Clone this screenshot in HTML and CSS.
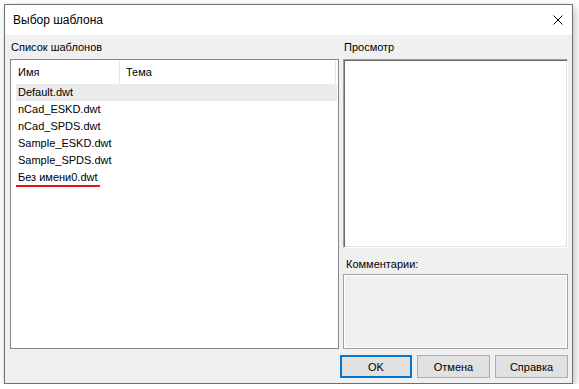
FILE: index.html
```html
<!DOCTYPE html>
<html lang="ru">

<head>
    <meta charset="UTF-8">
    <meta name="viewport" content="width=device-width, initial-scale=1.0">
    <title>Выбор шаблона</title>
    <link rel="stylesheet" href="styles.css">
</head>

<body>
    <div class="window">
        <div class="titlebar">
            <span class="title">Выбор шаблона</span>
            <span class="close">
                <svg width="10" height="10" viewBox="0 0 10 10">
                    <path d="M0.5 0.5 L9.5 9.5 M9.5 0.5 L0.5 9.5" stroke="#000" stroke-width="1" fill="none"/>
                </svg>
            </span>
        </div>

        <div class="content">
            <div class="columns">
                <div class="col-left">
                    <div class="label">Список шаблонов</div>
                    <div class="listbox">
                        <div class="list-header">
                            <div class="hcell name">Имя</div>
                            <div class="hcell theme">Тема</div>
                        </div>
                        <ul class="rows">
                            <li class="row selected">Default.dwt</li>
                            <li class="row">nCad_ESKD.dwt</li>
                            <li class="row">nCad_SPDS.dwt</li>
                            <li class="row">Sample_ESKD.dwt</li>
                            <li class="row">Sample_SPDS.dwt</li>
                            <li class="row marked">Без имени0.dwt</li>
                        </ul>
                    </div>
                </div>

                <div class="col-right">
                    <div class="label">Просмотр</div>
                    <div class="preview"></div>
                    <div class="label comments-label">Комментарии:</div>
                    <div class="comments"></div>
                </div>
            </div>

            <div class="buttons">
                <button class="btn default">OK</button>
                <button class="btn">Отмена</button>
                <button class="btn">Справка</button>
            </div>
        </div>
    </div>
</body>

</html>
```

FILE: styles.css
```css
/* Reset */
* {
    margin: 0;
    padding: 0;
    box-sizing: border-box;
}

body {
    font-family: "Liberation Sans", Arial, sans-serif;
    font-size: 11px;
    color: #000;
    background: #fff;
    padding: 4px 0 0 4px;
}

.window {
    width: 569px;
    height: 380px;
    border: 1px solid #6f6f6f;
    background: #f0f0f0;
    box-shadow: 2px 3px 8px rgba(0, 0, 0, 0.25);
    display: flex;
    flex-direction: column;
}

/* Title bar */
.titlebar {
    height: 30px;
    background: #fff;
    display: flex;
    align-items: center;
    justify-content: space-between;
    padding: 0 9px 0 8px;
}

.title {
    font-size: 12px;
    padding-bottom: 1px;
}

.close {
    display: flex;
    width: 10px;
    height: 10px;
    margin-bottom: 1px;
}

/* Main area */
.content {
    flex: 1;
    display: flex;
    flex-direction: column;
    padding: 0 4px 5px 5px;
}

.columns {
    height: 314px;
    display: flex;
    gap: 4px;
}

.col-left {
    width: 329px;
    display: flex;
    flex-direction: column;
}

.col-right {
    width: 225px;
    display: flex;
    flex-direction: column;
}

.label {
    height: 24px;
    line-height: 24px;
    padding-left: 1px;
}

.col-right .label {
    padding-left: 1px;
}

.comments-label {
    height: 26px;
    line-height: 32px;
    padding-left: 3px !important;
}

/* List of templates */
.listbox {
    flex: 1;
    border: 1px solid #828790;
    background: #fff;
}

.list-header {
    display: flex;
    height: 24px;
    width: 325px;
}

.hcell {
    line-height: 24px;
    padding-left: 7px;
}

.hcell.name {
    width: 109px;
    border-right: 1px solid #e5e5e5;
}

.hcell.theme {
    flex: 1;
    padding-left: 6px;
    border-right: 1px solid #e5e5e5;
}

.rows {
    list-style: none;
    padding-left: 5px;
}

.row {
    height: 17px;
    line-height: 16px;
    padding-left: 2px;
    width: 321px;
}

.row.selected {
    background: #ebebeb;
}

.row.marked {
    position: relative;
}

.row.marked::after {
    content: "";
    position: absolute;
    left: 0;
    top: 16px;
    width: 84px;
    height: 2px;
    background: #e4131e;
}

/* Preview and comments */
.preview {
    height: 189px;
    background: #fff;
    border: 1px solid;
    border-color: #a0a0a0 #fff #fff #a0a0a0;
    box-shadow: inset 1px 1px 0 #696969, inset -1px -1px 0 #e3e3e3;
}

.comments {
    height: 75px;
    background: #f0f0f0;
    border: 1px solid #a0a0a0;
    box-shadow: inset 1px 1px 0 #fff, inset -1px -1px 0 #fff;
}

/* Buttons */
.buttons {
    display: flex;
    justify-content: flex-end;
    gap: 5px;
    margin-top: 6px;
}

.btn {
    width: 73px;
    height: 23px;
    font-family: "Liberation Sans", Arial, sans-serif;
    font-size: 11px;
    color: #000;
    background: #e1e1e1;
    border: 1px solid #adadad;
}

.btn.default {
    width: 72px;
    border: 2px solid #0078d7;
}
```
